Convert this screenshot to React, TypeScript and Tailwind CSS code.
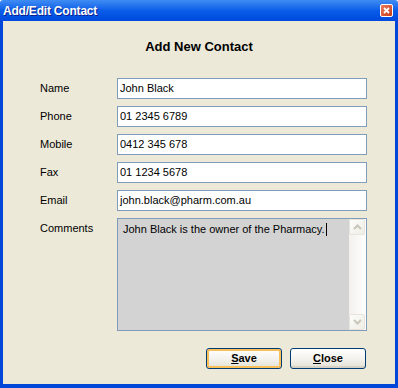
import React from 'react';

const fields = [
  { label: 'Name', value: 'John Black' },
  { label: 'Phone', value: '01 2345 6789' },
  { label: 'Mobile', value: '0412 345 678' },
  { label: 'Fax', value: '01 1234 5678' },
  { label: 'Email', value: 'john.black@pharm.com.au' },
];

function ScrollArrow({ up }: { up?: boolean }) {
  return (
    <div className="w-[16px] h-[16px] rounded-[2px] border border-[#e6e4dc] bg-gradient-to-br from-[#fdfdfb] to-[#eeede5] flex items-center justify-center">
      <svg width="9" height="6" viewBox="0 0 9 6">
        <path d={up ? 'M1 5 L4.5 1.5 L8 5' : 'M1 1 L4.5 4.5 L8 1'} stroke="#c9c7ba" strokeWidth="2" fill="none" />
      </svg>
    </div>
  );
}

function XpButton({ label, focused }: { label: string; focused?: boolean }) {
  return (
    <div
      className={`w-[76px] h-[21px] rounded-[3px] border border-[#003c74] flex items-center justify-center bg-gradient-to-b from-[#ffffff] via-[#f4f3ee] to-[#e3e1d6] ${
        focused ? 'shadow-[inset_0_0_0_2px_#f9c05a]' : 'shadow-[inset_0_-2px_0_#d6d0c5]'
      }`}
    >
      <span className="text-[11px] font-bold text-black leading-none">
        <span className="underline">{label[0]}</span>
        {label.slice(1)}
      </span>
    </div>
  );
}

export default function App() {
  return (
    <div className="w-[398px] h-[388px] flex flex-col font-['Liberation_Sans',Arial,sans-serif] select-none">
      {/* title bar */}
      <div className="h-[21px] flex items-center justify-between pl-[3px] pr-[5px] bg-gradient-to-b from-[#3f8cf3] via-[#0a5de8] to-[#0048dd] rounded-t-[3px]">
        <span className="text-white font-bold text-[12px] tracking-[-0.2px] [text-shadow:1px_1px_0_#0a1e8c]">
          Add/Edit Contact
        </span>
        <div className="w-[13px] h-[13px] rounded-[2px] border border-white bg-gradient-to-br from-[#e87b5c] to-[#c83a14] flex items-center justify-center">
          <svg width="7" height="7" viewBox="0 0 7 7">
            <path d="M1 1 L6 6 M6 1 L1 6" stroke="white" strokeWidth="1.8" />
          </svg>
        </div>
      </div>

      {/* body */}
      <div className="flex-1 bg-[#ece9d8] border-x-[3px] border-b-[4px] border-[#0046d8] flex flex-col">
        <h1 className="mt-[18px] h-[16px] text-center text-[13px] font-bold leading-[16px] text-black">
          Add New Contact
        </h1>

        <div className="mt-[23px] pl-[37px] grid grid-cols-[77px_250px] gap-y-[7px]">
          {fields.map(f => (
            <React.Fragment key={f.label}>
              <div className="h-[21px] flex items-center text-[11px] text-black">{f.label}</div>
              <div className="h-[21px] bg-white border border-[#7f9db9] flex items-center pl-[2px] text-[11px] text-black">
                {f.value}
              </div>
            </React.Fragment>
          ))}
          <div className="h-[21px] flex items-center text-[11px] text-black">Comments</div>
          <div className="h-[113px] bg-[#d3d3d3] border border-[#7f9db9] flex">
            <div className="flex-1 pl-[5px] pt-[4px] text-[11px] text-black leading-[13px]">
              John Black is the owner of the Pharmacy.
              <span className="inline-block w-[1px] h-[13px] bg-black align-top ml-[1px]" />
            </div>
            <div className="w-[17px] flex flex-col justify-between bg-gradient-to-r from-[#f3f1ec] to-[#fefefe]">
              <ScrollArrow up />
              <ScrollArrow />
            </div>
          </div>
        </div>

        <div className="mt-[17px] pl-[203px] flex gap-[8px]">
          <XpButton label="Save" focused />
          <XpButton label="Close" />
        </div>
      </div>
    </div>
  );
}
